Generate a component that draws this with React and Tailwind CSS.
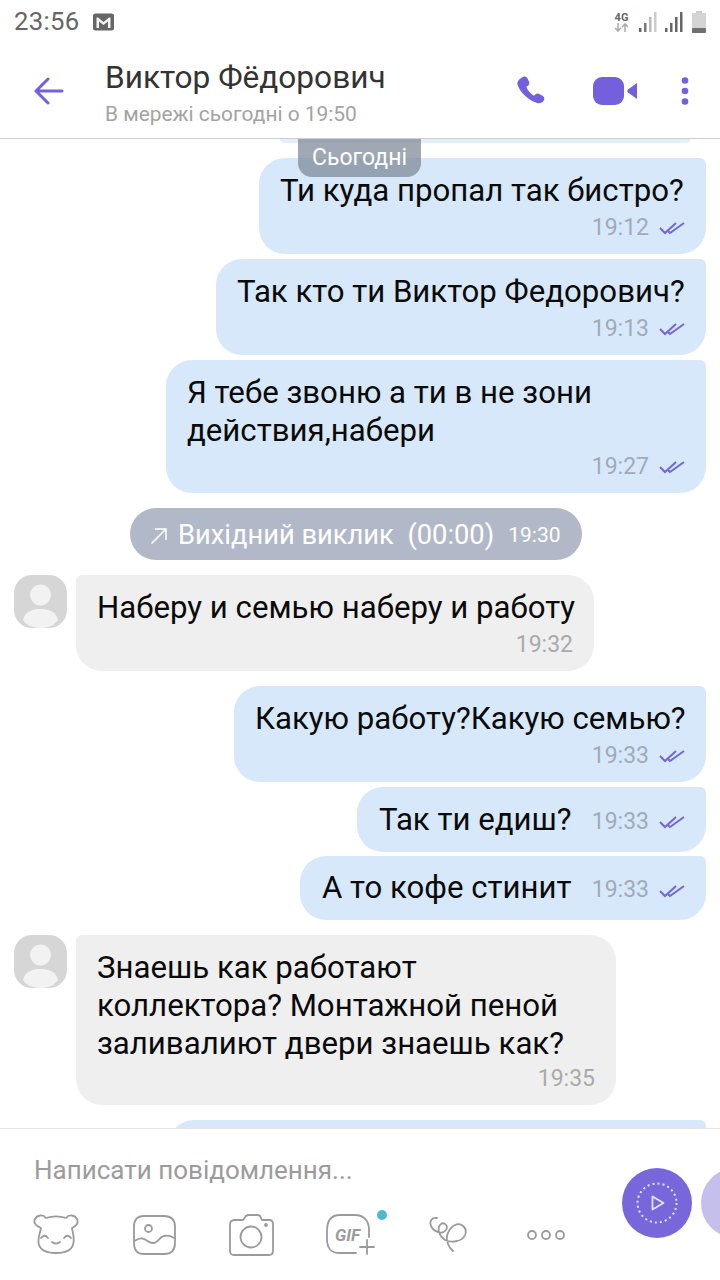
import React from "react";

const Checks = () => (
  <svg width="26" height="16" viewBox="0 0 26 16" fill="none" stroke="#7466d8" strokeWidth="2" className="shrink-0">
    <path d="M1 8l5 5L17 3" />
    <path d="M9 11l2 2L25 3" />
  </svg>
);

// Outgoing message; inline puts the time on the same row as the text
function Out({ children, time, width, gap = "mt-[4px]", inline }) {
  if (inline) {
    return (
      <div className={`self-end shrink-0 flex items-center ${width} ${inline} pl-[22px] pr-[21px] bg-[#d7e8fb] rounded-[26px] rounded-tr-[6px]`}>
        <span className="text-[31.2px] leading-[38px] text-[#0a0a0a] whitespace-nowrap">{children}</span>
        <span className="ml-auto pt-[5px] text-[23px] text-[#9fabb9]">{time}</span>
        <span className="ml-[10px] pt-[5px]"><Checks /></span>
      </div>
    );
  }
  return (
    <div className={`self-end shrink-0 ${width} pt-[14px] pb-[12px] pl-[21px] pr-[21px] bg-[#d7e8fb] rounded-[26px] rounded-tr-[6px]`}>
      <div className="text-[31.2px] leading-[38px] text-[#0a0a0a] whitespace-pre">{children}</div>
      <div className={`${gap} h-[28px] flex items-center justify-end gap-[10px] text-[23px] text-[#9fabb9]`}>
        {time}
        <Checks />
      </div>
    </div>
  );
}

function Avatar() {
  return (
    <svg width="53" height="53" viewBox="0 0 53 53" className="shrink-0">
      <rect width="53" height="53" rx="18" fill="#d6d6d6" />
      <circle cx="26.5" cy="20" r="10.5" fill="#f2f2f2" />
      <path d="M9 45c2-9 10-11 17.500-11S42 36 44 45c-4 6-10 8-17.500 8S13 51 9 45z" fill="#f2f2f2" />
    </svg>
  );
}

function In({ children, time, width, gap = "mt-[4px]" }) {
  return (
    <div className="flex shrink-0 pl-[14px] gap-[9px]">
      <Avatar />
      <div className={`${width} pt-[14px] pb-[12px] pl-[21px] pr-[21px] bg-[#efefef] rounded-[26px] rounded-tl-[6px]`}>
        <div className="text-[31.2px] leading-[38px] text-[#0a0a0a] whitespace-pre">{children}</div>
        <div className={`${gap} h-[28px] flex items-center justify-end text-[23px] text-[#aaaaaa]`}>{time}</div>
      </div>
    </div>
  );
}

const Signal = ({ faded }) => (
  <svg width="20" height="22" viewBox="0 0 20 22">
    <rect x="1" y="17" width="2.500" height="4" fill="#666" />
    <rect x="6" y="12" width="2.500" height="9" fill={faded ? "#777" : "#666"} />
    <rect x="11" y="6" width="2.500" height="15" fill={faded ? "#bbb" : "#666"} />
    <rect x="16" y="1" width="2.500" height="20" fill={faded ? "#ccc" : "#666"} />
  </svg>
);

const iconStroke = { fill: "none", stroke: "#9b9b9b", strokeWidth: 1.8, strokeLinecap: "round", strokeLinejoin: "round" };

export default function App() {
  return (
    <div className="w-[720px] h-[1280px] bg-white flex flex-col overflow-hidden font-['Roboto',sans-serif]">
      {/* Status bar */}
      <div className="h-[50px] shrink-0 flex items-center pl-[14px] pr-[14px] pb-[7px]">
        <span className="text-[25.7px] text-[#666666] tracking-[0.3px]">23:56</span>
        <svg width="21" height="18" viewBox="0 0 21 18" className="ml-[14px]">
          <rect width="21" height="17" y="0.500" rx="2.500" fill="#666" />
          <path d="M3.500 15V4.500h1.500l5.500 4.500L16 4.500h1.500V15H15V8.500l-4.500 3.500L6 8.500V15z" fill="#f2f2f2" />
        </svg>
        <div className="ml-auto flex items-center">
          <div className="flex flex-col items-center w-[17px] leading-none">
            <span className="text-[11px] font-bold text-[#666666] leading-[11px]">4G</span>
            <svg width="15" height="9" viewBox="0 0 15 9" fill="none" strokeWidth="1.500">
              <path d="M4 0v8M1 5l3 3 3-3" stroke="#aaa" />
              <path d="M11 9V1M8 4l3-3 3 3" stroke="#aaa" />
            </svg>
          </div>
          <div className="ml-[8px]"><Signal faded /></div>
          <div className="ml-[6px]"><Signal /></div>
          <svg width="14" height="22" viewBox="0 0 14 22" className="ml-[8px]">
            <rect x="4" y="0" width="6" height="2" fill="#ccc" />
            <rect x="0" y="2" width="14" height="20" rx="1" fill="#d4d4d4" />
            <rect x="0" y="17" width="14" height="5" rx="1" fill="#707070" />
          </svg>
        </div>
      </div>

      {/* Header */}
      <div className="h-[89px] shrink-0 flex items-center border-b border-[#cfcfcf] pb-[6px]">
        <div className="w-[105px] pl-[34px] shrink-0">
          <svg width="30" height="30" viewBox="0 0 30 30" fill="none" stroke="#7460dc" strokeWidth="3" strokeLinecap="round" strokeLinejoin="round" className="block">
            <path d="M28 15H3M14 3L2 15l12 12" />
          </svg>
        </div>
        <div className="flex-1 flex flex-col pt-[3px]">
          <span className="text-[31.6px] leading-[38px] text-[#333333]">Виктор Фёдорович</span>
          <span className="text-[20.9px] leading-[26px] mt-[4px] text-[#a3a3a3]">В мережі сьогодні о 19:50</span>
        </div>
        <div className="flex items-center pr-[31px]">
          <svg width="30" height="30" viewBox="0 0 30 30">
            <path d="M7 1c2.500-1 4 0 4.800 2l1.300 3c.5 1.500 0 3-1.200 3.800l-1.500 1c1 3.500 4 7 7.500 9l1.500-1.300c1-1 2.500-1.200 3.800-.5l3.300 1.800c2 1.100 2.300 3 1.300 4.700-1.200 2-3.500 3.200-6 2.700C13 25 3.500 16 1.500 8.500.8 5.500 4 2 7 1z" fill="#7460dc" />
          </svg>
          <svg width="45" height="28" viewBox="0 0 45 28" className="ml-[47px]">
            <rect width="31" height="28" rx="9" fill="#7460dc" />
            <path d="M44 6v16l-9-6.500a2 2 0 010-3z" fill="#7460dc" />
          </svg>
          <svg width="8" height="28" viewBox="0 0 8 28" className="ml-[43px]">
            <circle cx="4" cy="3.500" r="3.300" fill="#7460dc" />
            <circle cx="4" cy="14" r="3.300" fill="#7460dc" />
            <circle cx="4" cy="24.500" r="3.300" fill="#7460dc" />
          </svg>
        </div>
      </div>

      {/* Messages */}
      <div className="relative flex-1 min-h-0 overflow-hidden flex flex-col pr-[14px]">
        <div className="absolute left-[298px] top-0 w-[123px] h-[38px] z-10 rounded-b-[14px] bg-[#7f8b99]/75 flex items-center justify-center text-[23px] text-white">
          Сьогодні
        </div>
        <div className="self-end shrink-0 mr-[16px] w-[410px] h-[4px] bg-[#e3eefb] rounded-b-[20px] mb-[15px]"></div>
        <div className="flex flex-col shrink-0 gap-[5px]">
          <Out time="19:12" width="w-[447px]">Ти куда пропал так бистро?</Out>
          <Out time="19:13" width="w-[490px]">Так кто ти Виктор Федорович?</Out>
          <Out time="19:27" width="w-[540px]" gap="mt-[3px]">{"Я тебе звоню а ти в не зони\nдействия,набери"}</Out>
        </div>
        <div className="self-start shrink-0 ml-[130px] mt-[15px] mb-[15px] w-[452px] h-[52px] pt-[3px] rounded-full bg-[#b1b9c8] flex items-center pl-[20px] text-white">
          <svg width="18" height="18" viewBox="0 0 18 18" fill="none" stroke="#fff" strokeWidth="1.500" className="shrink-0">
            <path d="M1.500 16.500L16 2M5 2h11v11" />
          </svg>
          <span className="ml-[10px] text-[27.3px] whitespace-pre">Вихідний виклик  (00:00)</span>
          <span className="ml-[14px] text-[21px]">19:30</span>
        </div>
        <In time="19:32" width="w-[518px]">Наберу и семью наберу и работу</In>
        <div className="flex flex-col shrink-0 mt-[15px]">
          <Out time="19:33" width="w-[472px]">Какую работу?Какую семью?</Out>
          <Out time="19:33" width="w-[349px]" inline="h-[65px] mt-[5px]">Так ти едиш?</Out>
          <Out time="19:33" width="w-[406px]" inline="h-[64px] mt-[4px]">А то кофе стинит</Out>
        </div>
        <div className="mt-[15px] shrink-0">
          <In time="19:35" width="w-[540px]" gap="mt-[2px]">{"Знаешь как работают\nколлектора? Монтажной пеной\nзаливалиют двери знаешь как?"}</In>
        </div>
        <div className="self-end mt-[15px] w-[538px] h-[40px] shrink-0 bg-[#d7e8fb] rounded-tl-[26px] rounded-tr-[6px]"></div>
      </div>

      {/* Composer */}
      <div className="h-[152px] shrink-0 bg-white border-t border-[#e3e3e3] flex overflow-hidden">
        <div className="w-[622px] shrink-0 flex flex-col">
          <div className="pl-[34px] pt-[24px] text-[26px] leading-[34px] text-[#9b9b9b] whitespace-nowrap">Написати повідомлення...</div>
          <div className="flex gap-[50px] pl-[32px] mt-[24px]">
            <svg width="48" height="48" viewBox="0 0 48 48" {...iconStroke}>
              <path d="M9 17C4 15 1 12 3 8s8-5 11-1c6-2 14-2 20 0 3-4 9-3 11 1s-1 7-5 9c1 6 3 11 1 17-2 6-9 8-17 8s-15-2-17-8c-2-6 1-11 2-17z" />
              <path d="M9 27c2-3 5-3 7 0M32 27c2-3 5-3 7 0M20 31c2 2 6 2 8 0" />
            </svg>
            <svg width="48" height="48" viewBox="0 0 48 48" {...iconStroke}>
              <path d="M14 5h20c8 0 11 4 11 11v16c0 8-4 11-11 11H14c-7 0-10-4-10-11V16C4 9 7 5 14 5z" />
              <circle cx="18.500" cy="17.500" r="3.500" />
              <path d="M4.500 30c6-4 9-3 13 0s8 3 12-2 9-4 15-1" />
            </svg>
            <svg width="48" height="48" viewBox="0 0 48 48" {...iconStroke}>
              <path d="M6 9h9l3-4c1-1 2-1 3-1h8c1 0 2 0 3 1l2 4h7c3 0 4 2 4 4v27c0 3-2 4-4 4H6c-3 0-4-2-4-4V13c0-2 2-4 4-4z" />
              <circle cx="23" cy="26" r="10.500" />
              <circle cx="38" cy="14" r="1" fill="#9b9b9b" />
            </svg>
            <div className="relative w-[48px] h-[48px]">
              <svg width="50" height="48" viewBox="0 0 50 48" {...iconStroke}>
                <path d="M30 42H14C5 42 1 38 1 28v-8C1 10 5 4 14 4h15c9 0 14 6 14 15v7" />
                <path d="M41 29v14M34 36h14" />
              </svg>
              <span className="absolute left-[9px] top-[12px] text-[17px] leading-[24px] font-bold italic text-[#9b9b9b]">GIF</span>
              <span className="absolute left-[51px] top-[-1px] w-[10px] h-[10px] rounded-full bg-[#4fb9cf]"></span>
            </div>
            <svg width="48" height="48" viewBox="0 0 48 48" {...iconStroke}>
              <path d="M13 7C8 6 5 10 7 15c3 6 11 9 15 4 3-5-3-9-6-5-3 4-1 11 5 15 6 3 17 2 20-5 3-7-4-13-10-10-7 4-10 12-7 19 1 3 3 5 5 7" />
            </svg>
            <svg width="48" height="48" viewBox="0 0 48 48" {...iconStroke}>
              <circle cx="10" cy="24" r="4" />
              <circle cx="24" cy="24" r="4" />
              <circle cx="38" cy="24" r="4" />
            </svg>
          </div>
        </div>
        <div className="flex gap-[9px] pt-[39px]">
          <div className="w-[70px] h-[70px] shrink-0 rounded-full bg-[#7767da] flex items-center justify-center">
            <svg width="42" height="42" viewBox="0 0 42 42" fill="none" stroke="#e6e1fa">
              <circle cx="21" cy="21" r="19.500" strokeWidth="2" strokeDasharray="2 3.100" />
              <path d="M16.500 14.500v13l11-6.500z" strokeWidth="1.800" strokeLinejoin="round" />
            </svg>
          </div>
          <div className="w-[70px] h-[70px] shrink-0 rounded-full bg-[#c5bfeb]"></div>
        </div>
      </div>
    </div>
  );
}
